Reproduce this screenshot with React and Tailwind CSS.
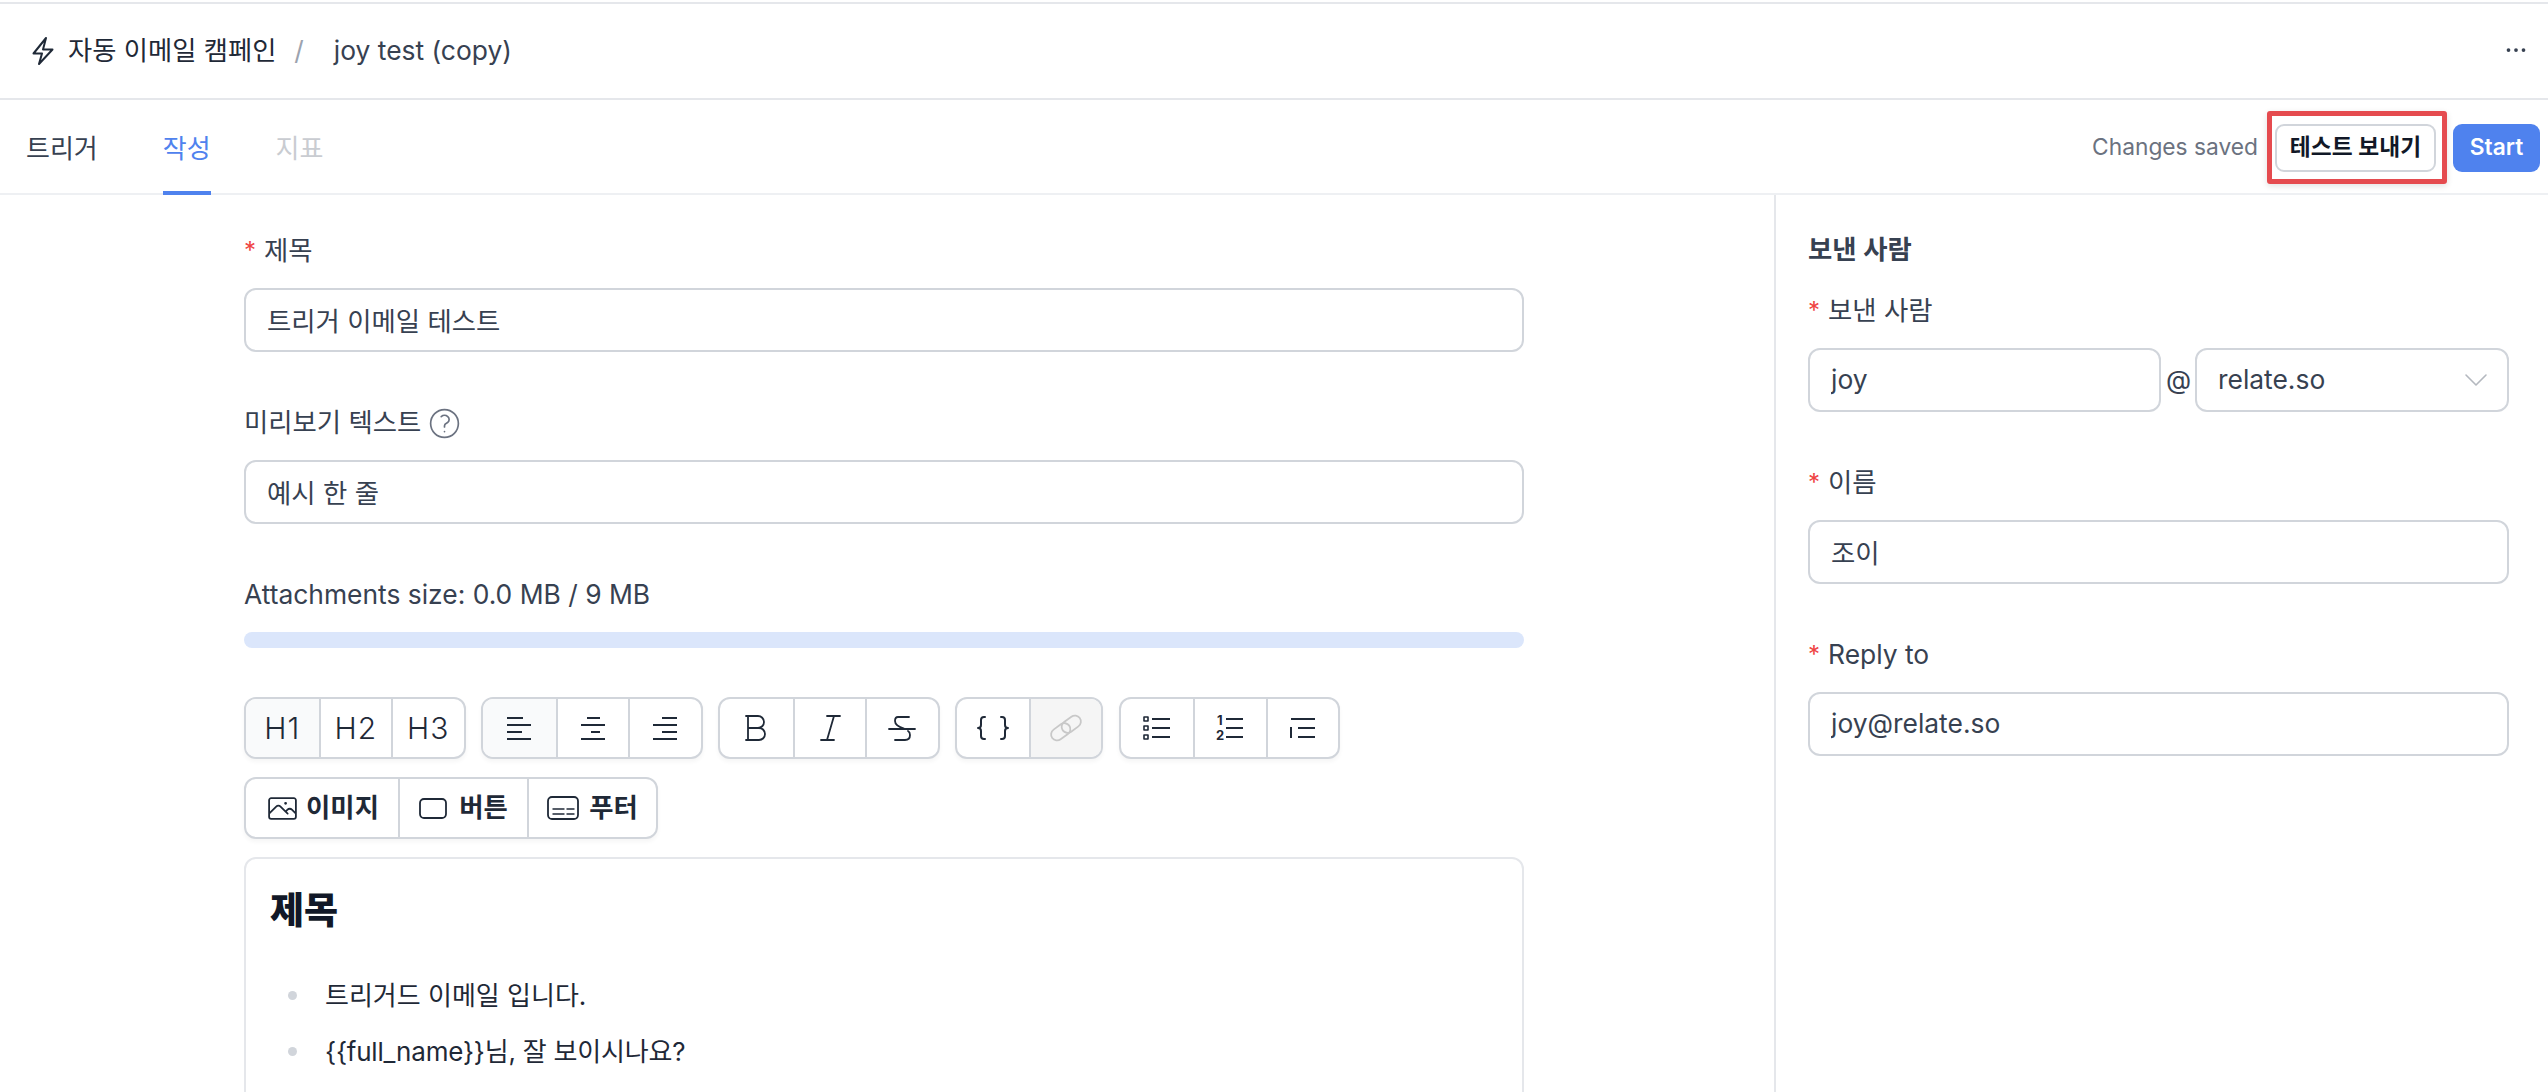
import React from "react";
import { HiOutlineEllipsisHorizontal, HiOutlineQuestionMarkCircle, HiOutlineChevronDown, HiOutlinePhoto } from "react-icons/hi2";

const S = ({ w = 28, h = 28, children, className = "" }) => (
  <svg width={w} height={h} viewBox={`0 0 ${w} ${h}`} fill="none" stroke="currentColor" strokeWidth="1.8" strokeLinecap="round" strokeLinejoin="round" className={className}>{children}</svg>
);

const Lightning = () => <S w={22} h={28} className="mr-[14px]"><path strokeWidth="2" d="M1.5 16.5 14 1l-3 11.5h9.5L7 27l3-10.5H1.5z" /></S>;
const AlignL = () => <S w={26} h={26}><path strokeWidth="2" strokeLinecap="butt" d="M1 3h16M1 10h24M1 17h15M1 24h24" /></S>;
const AlignC = () => <S w={26} h={26}><path strokeWidth="2" strokeLinecap="butt" d="M7 3h13M1 10h24M11 17h9M1 24h24" /></S>;
const AlignR = () => <S w={26} h={26}><path strokeWidth="2" strokeLinecap="butt" d="M10 3h15M1 10h24M10 17h15M1 24h24" /></S>;
const Bold = () => <S w={22} h={26}><path d="M1 1h12a6 6 0 0 1 0 12H3M3 1v24M1 25h13a6 6 0 0 0 0-12" /></S>;
const Italic = () => <S w={22} h={26}><path d="M8 1h13M2 25h13M15 1 8 25" /></S>;
const Strike = () => <S w={28} h={27}><path d="M1 14h26M21 2H10C8 2 7 4 7 6c0 3 4 6 9 7.5M20 16c2 1 2 2.5 2 4 0 3-2 5-5 5H7" /></S>;
const Braces = () => <S w={32} h={26}><path strokeWidth="2" d="M8 2H7a3 3 0 0 0-3 3v5c0 2-1 3-3 3 2 0 3 1 3 3v5a3 3 0 0 0 3 3h1M24 2h1a3 3 0 0 1 3 3v5c0 2 1 3 3 3-2 0-3 1-3 3v5a3 3 0 0 1-3 3h-1" /></S>;
const Chain = () => (
  <S w={36} h={28}>
    <g transform="rotate(-36 18 14)">
      <rect x="1" y="8" width="21" height="12" rx="6" />
      <rect x="14" y="8" width="21" height="12" rx="6" />
    </g>
  </S>
);
const BulletList = () => (
  <S w={28} h={24}>
    <path strokeWidth="2" strokeLinecap="butt" d="M9 3h18M9 12h18M9 21h18" />
    <rect x="1" y="1" width="4" height="4" strokeWidth="1.6" />
    <rect x="1" y="10" width="4" height="4" strokeWidth="1.6" />
    <rect x="1" y="19" width="4" height="4" strokeWidth="1.6" />
  </S>
);
const NumList = () => (
  <S w={28} h={32}>
    <path strokeWidth="2" strokeLinecap="butt" d="M10 7h17M10 16h17M10 25h17" />
    <text x="1" y="13" fontSize="13" fontWeight="700" fill="currentColor" stroke="none" fontFamily="Inter">1</text>
    <text x="0" y="28" fontSize="13" fontWeight="700" fill="currentColor" stroke="none" fontFamily="Inter">2</text>
  </S>
);
const Outdent = () => <S w={26} h={24}><path strokeWidth="2" strokeLinecap="butt" d="M1 3h24M1 11v11M8 12h17M8 21h17" /></S>;
const BtnIcon = () => <S w={28} h={21}><rect x="1" y="1" width="26" height="19" rx="4" /></S>;
const FooterIcon = () => <S w={32} h={24}><rect x="1" y="1" width="30" height="22" rx="4" /><path strokeWidth="1.4" d="M6 13h11M20 13h7M6 18h11M20 18h7" /></S>;

const Cell = ({ children, w = "w-[72.5px]", bg = "", cls = "" }) => (
  <div className={`flex h-full items-center justify-center border-l-2 border-[#d1d5db] first:border-l-0 ${w} ${bg} ${cls}`}>{children}</div>
);
const Group = ({ children }) => (
  <div className="flex h-[62px] overflow-hidden rounded-[12px] border-2 border-[#d1d5db] bg-white text-[#1f2937] shadow-[0_3px_4px_rgba(0,0,0,0.04)]">{children}</div>
);
const HText = ({ children }) => <span className="text-[30px] font-light tracking-[1px] text-[#1f2937]">{children}</span>;

const Star = ({ gap = "mr-[8px]" }) => <span className={`text-[24px] leading-none text-[#ef4444] ${gap}`}>*</span>;
const Label = ({ req, children, cls = "" }) => (
  <div className={`mb-[19px] flex h-[39px] items-center pt-[3px] text-[26.4px] text-[#374151] ${cls}`}>
    {req && <Star />}
    {children}
  </div>
);
const Field = ({ value, cls = "w-full" }) => (
  <input readOnly value={value} className={`h-[64px] rounded-[12px] border-2 border-[#d1d5db] bg-white px-[21px] pb-[2px] text-[26.4px] text-[#374151] outline-none ${cls}`} />
);

export default function App() {
  return (
    <div className="h-[1092px] w-full overflow-hidden bg-white pt-[2px] font-['Inter','Noto_Sans_CJK_KR',sans-serif]">
      <div className="h-[2px] bg-[#e5e7eb]" />
      <header className="flex h-[96px] items-center justify-between border-b-2 border-[#e5e7eb] pl-[32px] pr-[17px] text-[26.3px] text-[#1f2937]">
        <div className="flex items-center">
          <Lightning />
          <span>자동 이메일 캠페인</span>
          <span className="ml-[18px] text-[#9ca3af]">/</span>
          <span className="ml-[30px] text-[26.4px] text-[#374151]">joy test (copy)</span>
        </div>
        <HiOutlineEllipsisHorizontal className="h-[30px] w-[30px] -translate-y-px text-[#374151]" />
      </header>
      <nav className="flex h-[95px] items-stretch justify-between border-b-2 border-[#eef0f3] pl-[26px] pr-[8px] pt-[2px]">
        <div className="flex gap-[65px] text-[26px]">
          <div className="flex items-center pt-[1px] text-[#374151]">트리거</div>
          <div className="-mb-[2px] flex items-center border-b-4 border-[#4f82ee] pt-[3px] text-[#4f82ee]">작성</div>
          <div className="flex items-center pt-[1px] text-[#c9ccd1]">지표</div>
        </div>
        <div className="flex items-center text-[22.75px]">
          <span className="mr-[17px] text-[#6b7280]">Changes saved</span>
          <div className="relative mr-[17px]">
            <button className="flex h-[48px] w-[161px] items-center justify-center rounded-[9px] border-2 border-[#d1d5db] bg-white font-semibold text-[#111827]">테스트 보내기</button>
            <div className="pointer-events-none absolute -bottom-[12px] -left-[8px] -right-[11px] -top-[13px] rounded-[3px] border-[5px] border-[#e54b4f] shadow-[0_2px_6px_rgba(0,0,0,0.12)]" />
          </div>
          <button className="flex h-[48px] w-[87px] items-center justify-center rounded-[9px] bg-[#4f82ee] font-semibold text-white">Start</button>
        </div>
      </nav>
      <main className="flex h-[900px]">
        <section className="w-[1776px] shrink-0 border-r-2 border-[#e5e7eb] pl-[244px] pr-[250px] pt-[35px]">
          <Label req>제목</Label>
          <Field value="트리거 이메일 테스트" />
          <Label cls="mt-[50px]">
            미리보기 텍스트
            <HiOutlineQuestionMarkCircle strokeWidth={1.1} className="ml-[5px] h-[37px] w-[37px] text-[#6b7280]" />
          </Label>
          <Field value="예시 한 줄" />
          <div className="mt-[50px] flex h-[39px] items-center pt-[3px] text-[26.4px] text-[#374151]">Attachments size: 0.0 MB / 9 MB</div>
          <div className="mt-[19px] h-[16px] rounded-full bg-[#dbe6fb]" />
          <div className="mt-[49px] flex gap-[15.5px]">
            <Group>
              <Cell bg="bg-[#f9fafb]"><HText>H1</HText></Cell>
              <Cell><HText>H2</HText></Cell>
              <Cell><HText>H3</HText></Cell>
            </Group>
            <Group>
              <Cell bg="bg-[#f9fafb]"><AlignL /></Cell>
              <Cell><AlignC /></Cell>
              <Cell><AlignR /></Cell>
            </Group>
            <Group>
              <Cell><Bold /></Cell>
              <Cell><Italic /></Cell>
              <Cell><Strike /></Cell>
            </Group>
            <Group>
              <Cell w="w-[72px]"><Braces /></Cell>
              <Cell w="w-[72px]" bg="bg-[#f5f5f5]" cls="text-[#c8c8c8]"><Chain /></Cell>
            </Group>
            <Group>
              <Cell><BulletList /></Cell>
              <Cell><NumList /></Cell>
              <Cell><Outdent /></Cell>
            </Group>
          </div>
          <div className="mt-[18px] flex">
            <Group>
              <Cell w="w-[152px]" cls="gap-[7px] pl-[1px] text-[26.4px] font-bold"><HiOutlinePhoto strokeWidth={1.3} className="h-[33px] w-[33px]" />이미지</Cell>
              <Cell w="w-[129px]" cls="gap-[12px] text-[26.4px] font-bold"><BtnIcon />버튼</Cell>
              <Cell w="w-[129px]" cls="gap-[10px] text-[26.4px] font-bold"><FooterIcon />푸터</Cell>
            </Group>
          </div>
          <div className="mt-[18px] h-[400px] rounded-[12px] border-2 border-[#e5e7eb] bg-white pl-[24px] pt-[27px] text-[26px] text-[#1f2937]">
            <h1 className="text-[37px] font-extrabold leading-[50px] text-[#111827]">제목</h1>
            <ul className="mt-[31px] pl-[18px]">
              <li className="flex h-[56px] items-center gap-[28px]"><span className="h-[9px] w-[9px] rounded-full bg-[#d1d5db]" />트리거드 이메일 입니다.</li>
              <li className="flex h-[56px] items-center gap-[28px] tracking-[-0.2px]"><span className="h-[9px] w-[9px] rounded-full bg-[#d1d5db]" />{"{{full_name}}님, 잘 보이시나요?"}</li>
            </ul>
          </div>
        </section>
        <aside className="flex-1 pl-[32px] pr-[39px] pt-[35px]">
          <div className="flex h-[39px] items-center text-[26.4px] font-semibold text-[#374151]">보낸 사람</div>
          <Label req cls="mt-[21px]">보낸 사람</Label>
          <div className="flex items-center">
            <Field value="joy" cls="w-[353px]" />
            <span className="mx-[5px] w-[24px] pb-[2px] text-center text-[26px] text-[#374151]">@</span>
            <div className="flex h-[64px] flex-1 items-center justify-between rounded-[12px] border-2 border-[#d1d5db] bg-white pl-[21px] pr-[15px] text-[26.4px] text-[#374151]">
              relate.so
              <HiOutlineChevronDown strokeWidth={1.2} className="h-[32px] w-[32px] text-[#b4b8bf]" />
            </div>
          </div>
          <Label req cls="mt-[50px]">이름</Label>
          <Field value="조이" />
          <Label req cls="mt-[50px]">Reply to</Label>
          <Field value="joy@relate.so" />
        </aside>
      </main>
    </div>
  );
}
